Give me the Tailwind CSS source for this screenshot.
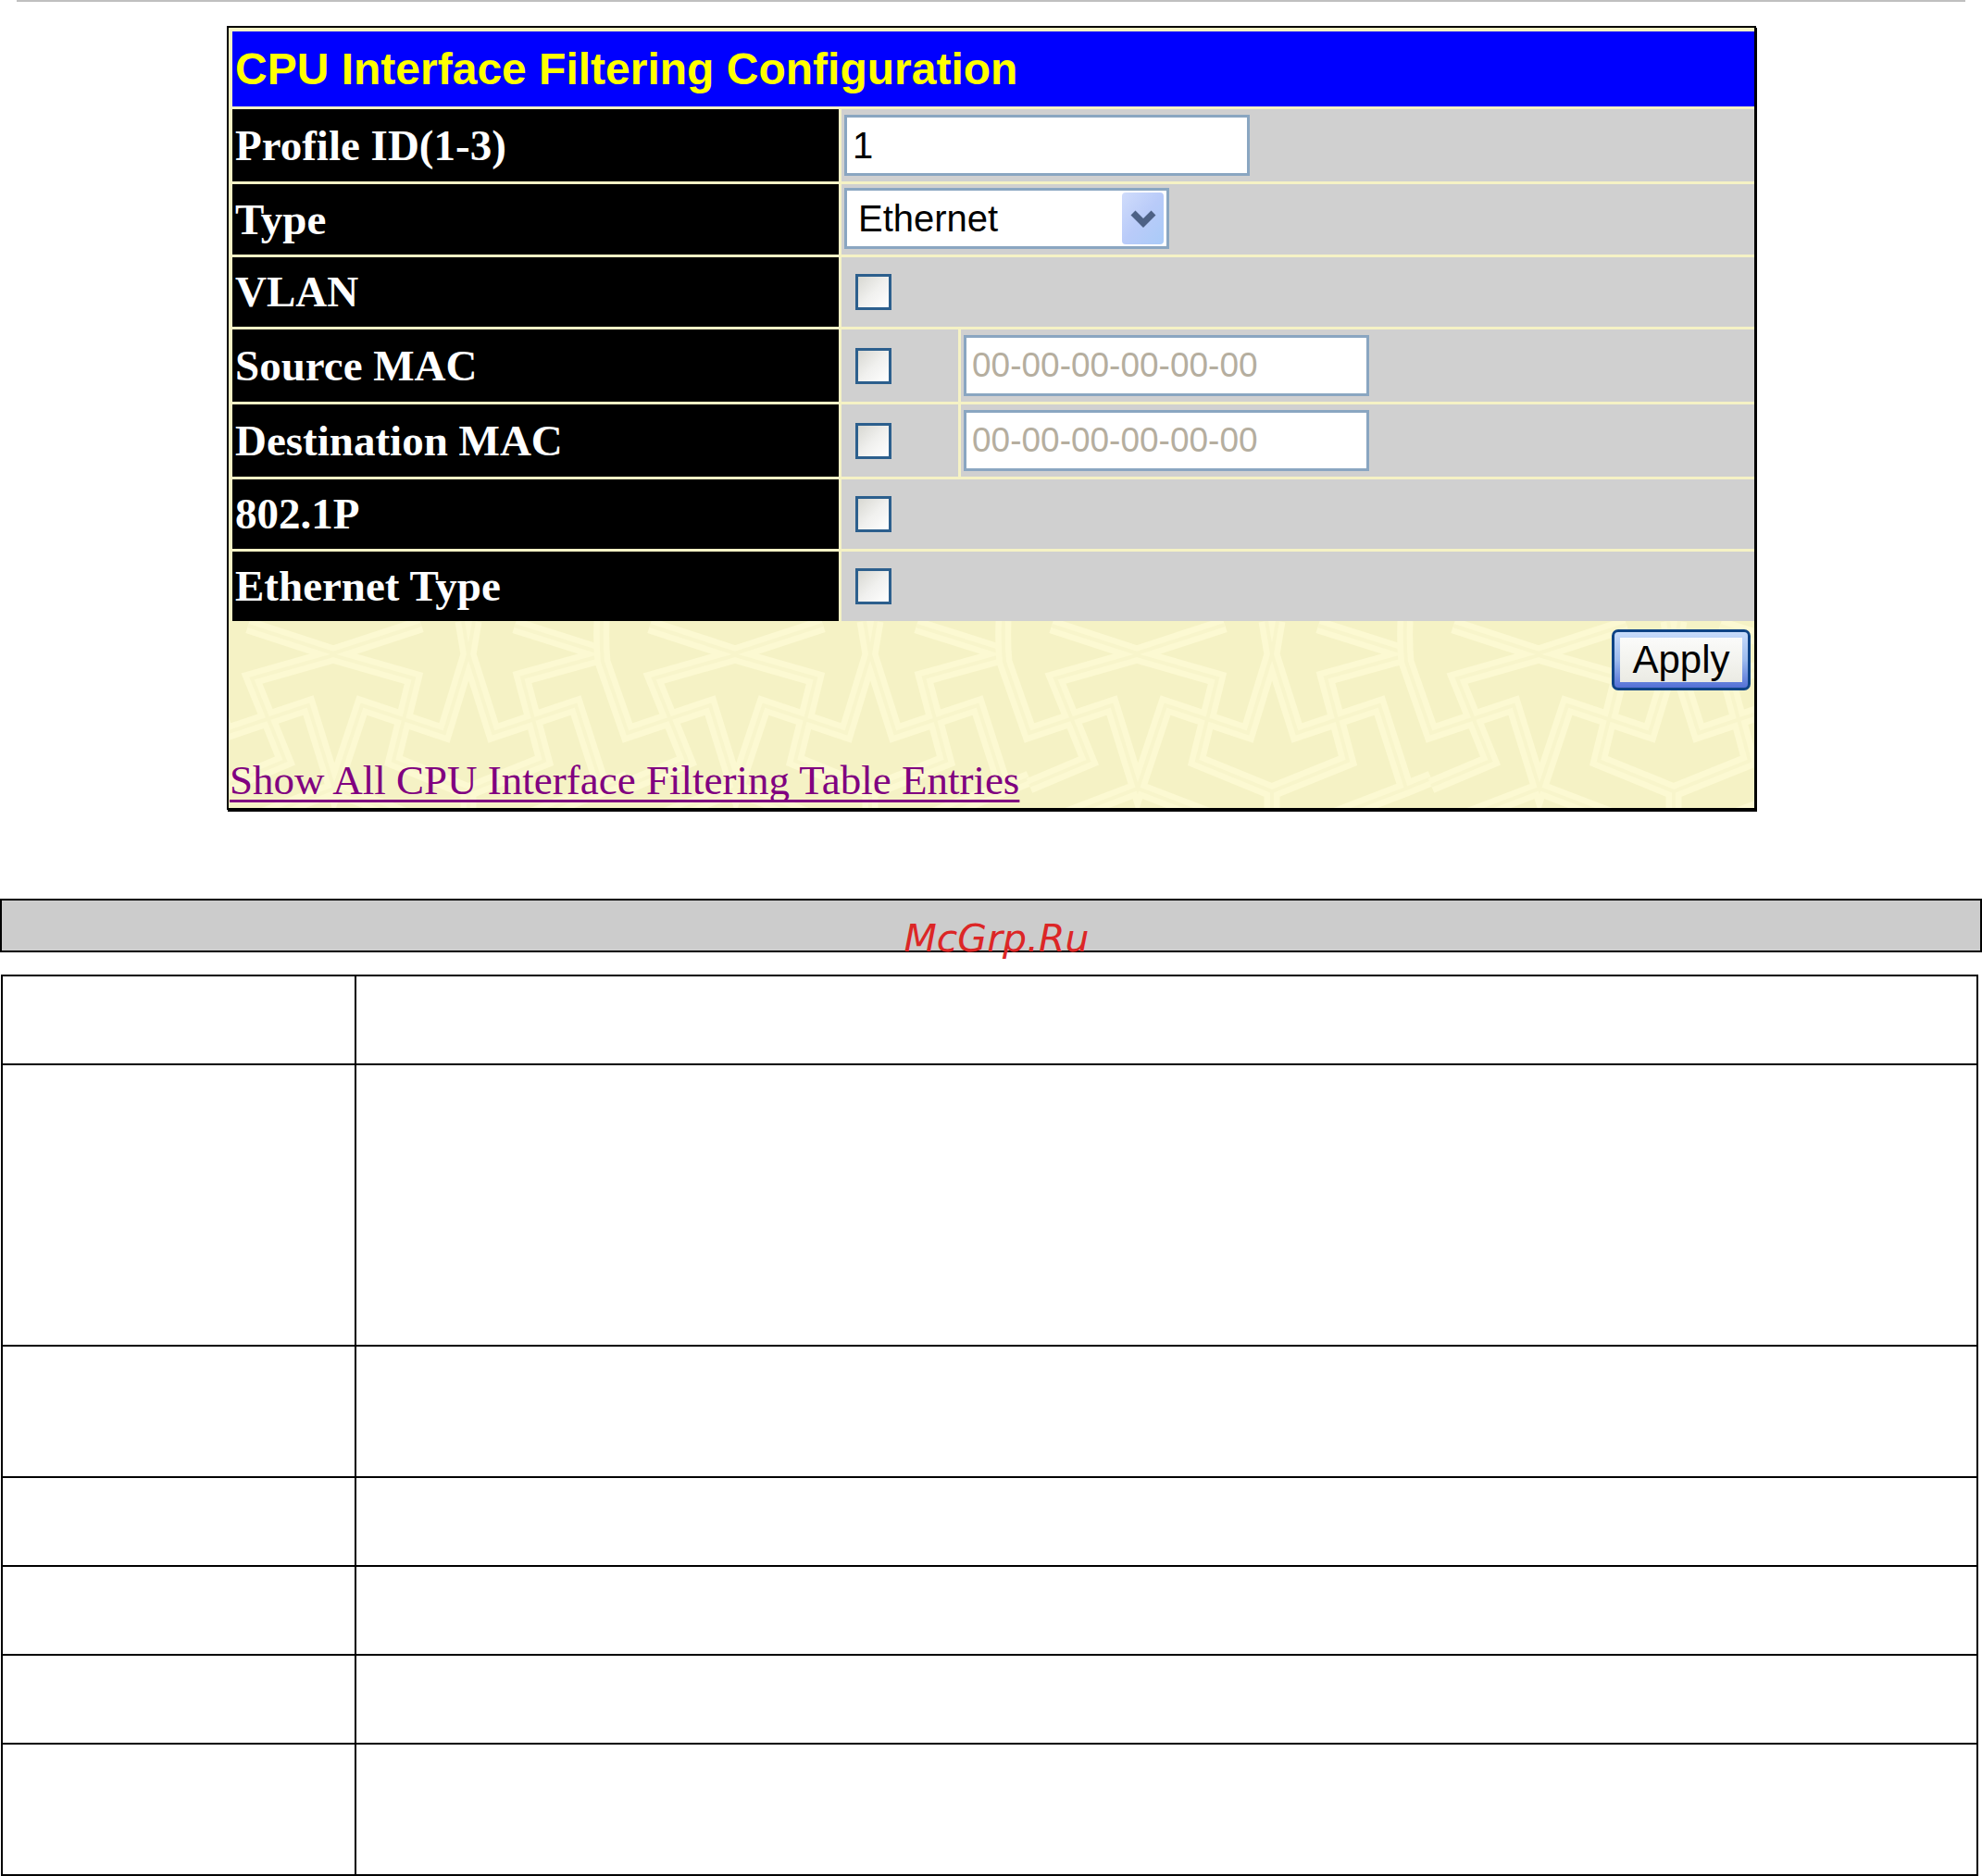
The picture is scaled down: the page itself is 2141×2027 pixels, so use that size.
<!DOCTYPE html>
<html lang="en">
<head>
<meta charset="utf-8">
<title>CPU Interface Filtering Configuration</title>
<script src="https://cdn.jsdelivr.net/npm/@tailwindcss/browser@4"></script>
</head>
<body class="bg-white text-black">
<hr class="mx-[18px] h-0.5 border-0 bg-[#c0c0c0]">

<main>
  <section class="pt-[26px] pl-[245px] pr-[244px]">
    <form class="border-2 border-black bg-[#f5f2c5] shadow-[1px_2px_0_#000]">
      <div class="flex flex-col gap-[3px] pt-1 pl-1 font-['Liberation_Serif',serif] text-[47px] font-bold leading-none text-white">
        <h1 class="flex h-[81px] items-center bg-[#0000ff] pl-[3px] font-['Liberation_Sans',sans-serif] text-[48px] text-[#ffff00]">CPU Interface Filtering Configuration</h1>

        <div class="flex h-[78px] gap-[3px]">
          <label for="profile" class="flex w-[655px] shrink-0 items-center bg-black pl-[3px]">Profile ID(1-3)</label>
          <div class="flex flex-1 items-center bg-[#d0d0d0] pl-[3px]">
            <input id="profile" type="text" value="1" class="h-[66px] w-[438px] border-[3px] border-[#8aa6c1] bg-white px-1.5 font-['Liberation_Sans',sans-serif] text-[40px] font-normal text-black">
          </div>
        </div>

        <div class="flex h-[76px] gap-[3px]">
          <label for="type" class="flex w-[655px] shrink-0 items-center bg-black pl-[3px]">Type</label>
          <div class="flex flex-1 items-start bg-[#d0d0d0] pt-1 pl-[3px]">
            <div class="relative">
              <select id="type" class="block h-[66px] w-[351px] appearance-none border-[3px] border-[#8aa6c1] bg-white px-3 font-['Liberation_Sans',sans-serif] text-[40px] font-normal leading-none text-black">
                <option>Ethernet</option>
              </select>
              <span class="pointer-events-none absolute inset-y-[5px] right-1.5 flex w-[45px] items-center justify-center rounded-[4px] bg-linear-to-br from-[#d0dcfb] via-[#b9cbf9] to-[#a9cbf8]">
                <svg class="h-[19px] w-[28px]" viewBox="0 0 28 19" fill="none"><path d="M3 3 14 14 25 3" stroke="#4d6185" stroke-width="7"/></svg>
              </span>
            </div>
          </div>
        </div>

        <div class="flex h-[75px] gap-[3px]">
          <label for="vlan" class="flex w-[655px] shrink-0 items-center bg-black pl-[3px]">VLAN</label>
          <div class="flex flex-1 items-center bg-[#d0d0d0] pl-[15px]">
            <input id="vlan" type="checkbox" class="size-[39px] appearance-none border-[3px] border-[#2c5f8d] bg-linear-to-br from-[#d8d8d2] via-[#f0f0ee] to-white">
          </div>
        </div>

        <div class="flex h-[78px] gap-[3px]">
          <label for="src" class="flex w-[655px] shrink-0 items-center bg-black pl-[3px]">Source MAC</label>
          <div class="flex w-[126px] items-center bg-[#d0d0d0] pl-[15px]">
            <input id="src" type="checkbox" class="size-[39px] appearance-none border-[3px] border-[#2c5f8d] bg-linear-to-br from-[#d8d8d2] via-[#f0f0ee] to-white">
          </div>
          <div class="flex flex-1 items-center bg-[#d0d0d0] pl-[3px]">
            <input type="text" aria-label="Source MAC address" value="00-00-00-00-00-00" disabled class="h-[66px] w-[438px] border-[3px] border-[#8aa6c1] bg-white px-1.5 font-['Liberation_Sans',sans-serif] text-[37px] font-normal text-[#b5ae9f]">
          </div>
        </div>

        <div class="flex h-[78px] gap-[3px]">
          <label for="dst" class="flex w-[655px] shrink-0 items-center bg-black pl-[3px]">Destination MAC</label>
          <div class="flex w-[126px] items-center bg-[#d0d0d0] pl-[15px]">
            <input id="dst" type="checkbox" class="size-[39px] appearance-none border-[3px] border-[#2c5f8d] bg-linear-to-br from-[#d8d8d2] via-[#f0f0ee] to-white">
          </div>
          <div class="flex flex-1 items-center bg-[#d0d0d0] pl-[3px]">
            <input type="text" aria-label="Destination MAC address" value="00-00-00-00-00-00" disabled class="h-[66px] w-[438px] border-[3px] border-[#8aa6c1] bg-white px-1.5 font-['Liberation_Sans',sans-serif] text-[37px] font-normal text-[#b5ae9f]">
          </div>
        </div>

        <div class="flex h-[75px] gap-[3px]">
          <label for="dot1p" class="flex w-[655px] shrink-0 items-center bg-black pl-[3px]">802.1P</label>
          <div class="flex flex-1 items-center bg-[#d0d0d0] pl-[15px]">
            <input id="dot1p" type="checkbox" class="size-[39px] appearance-none border-[3px] border-[#2c5f8d] bg-linear-to-br from-[#d8d8d2] via-[#f0f0ee] to-white">
          </div>
        </div>

        <div class="flex h-[75px] gap-[3px]">
          <label for="ethtype" class="flex w-[655px] shrink-0 items-center bg-black pl-[3px]">Ethernet Type</label>
          <div class="flex flex-1 items-center bg-[#d0d0d0] pl-[15px]">
            <input id="ethtype" type="checkbox" class="size-[39px] appearance-none border-[3px] border-[#2c5f8d] bg-linear-to-br from-[#d8d8d2] via-[#f0f0ee] to-white">
          </div>
        </div>
      </div>

      <div class="relative overflow-hidden">
        <!-- interlaced star ornament behind the footer -->
        <svg class="absolute inset-0 h-full w-full" aria-hidden="true" fill="none">
          <defs>
            <path id="lattice" d="M53 5 145 35 240 4M29 178 93 151 57 62 145 37 232 62 210 151 291 184 373 151 349 61 436 37M291 184V214M1 0Q0 24 2 44L29 121 118 91 146 181 176 91 265 121 291 36 285 0M297 0 291 36 318 121 407 91 436 181M341 5 436 35M60 214 146 181 232 214M350 214 436 181 463 170"/>
            <g id="star">
              <use href="#lattice" stroke="#fcf9d2" stroke-width="17"/>
              <use href="#lattice" stroke="#f8f5cb" stroke-width="4"/>
            </g>
          </defs>
          <use href="#star" x="-32"/><use href="#star" x="402"/><use href="#star" x="836"/><use href="#star" x="1270"/>
        </svg>
        <div class="relative flex flex-col pt-[9px]">
          <button type="button" class="mr-1 h-[66px] w-[150px] self-end rounded-[7px] border-[3px] border-[#0f4486] bg-linear-to-b from-[#c8dcfb] via-[#9dbbee] to-[#5570d6] p-1.5 font-['Liberation_Sans',sans-serif] text-[42px] leading-none text-black"><span class="flex h-full items-center justify-center bg-linear-to-b from-[#fbfbfa] to-[#ebebe4]">Apply</span></button>
          <a href="#entries" class="mt-[72px] mb-[5px] self-start pl-px font-['Liberation_Serif',serif] text-[45px] leading-[50px] text-[#800080] underline decoration-[3px] underline-offset-[6px] [text-decoration-skip-ink:none]">Show All CPU Interface Filtering Table Entries</a>
        </div>
      </div>
    </form>
  </section>

  <div class="relative mt-24 h-[58px] border-2 border-black bg-[#ccc]">
    <p class="absolute inset-x-0 top-[18px] pl-3 text-center font-['DejaVu_Sans',sans-serif] text-[41px] leading-[47px] italic text-[#dc2626]">McGrp.Ru</p>
  </div>

  <div class="mt-6 pr-1 pl-px">
    <table class="w-full table-fixed border-collapse" aria-label="Parameter descriptions">
      <colgroup><col class="w-[382px]"><col></colgroup>
      <tbody>
        <tr class="h-[96px]"><td class="border-2 border-black"></td><td class="border-2 border-black"></td></tr>
        <tr class="h-[304px]"><td class="border-2 border-black"></td><td class="border-2 border-black"></td></tr>
        <tr class="h-[142px]"><td class="border-2 border-black"></td><td class="border-2 border-black"></td></tr>
        <tr class="h-[96px]"><td class="border-2 border-black"></td><td class="border-2 border-black"></td></tr>
        <tr class="h-[96px]"><td class="border-2 border-black"></td><td class="border-2 border-black"></td></tr>
        <tr class="h-[96px]"><td class="border-2 border-black"></td><td class="border-2 border-black"></td></tr>
        <tr class="h-[142px]"><td class="border-2 border-black"></td><td class="border-2 border-black"></td></tr>
      </tbody>
    </table>
  </div>
</main>
</body>
</html>
